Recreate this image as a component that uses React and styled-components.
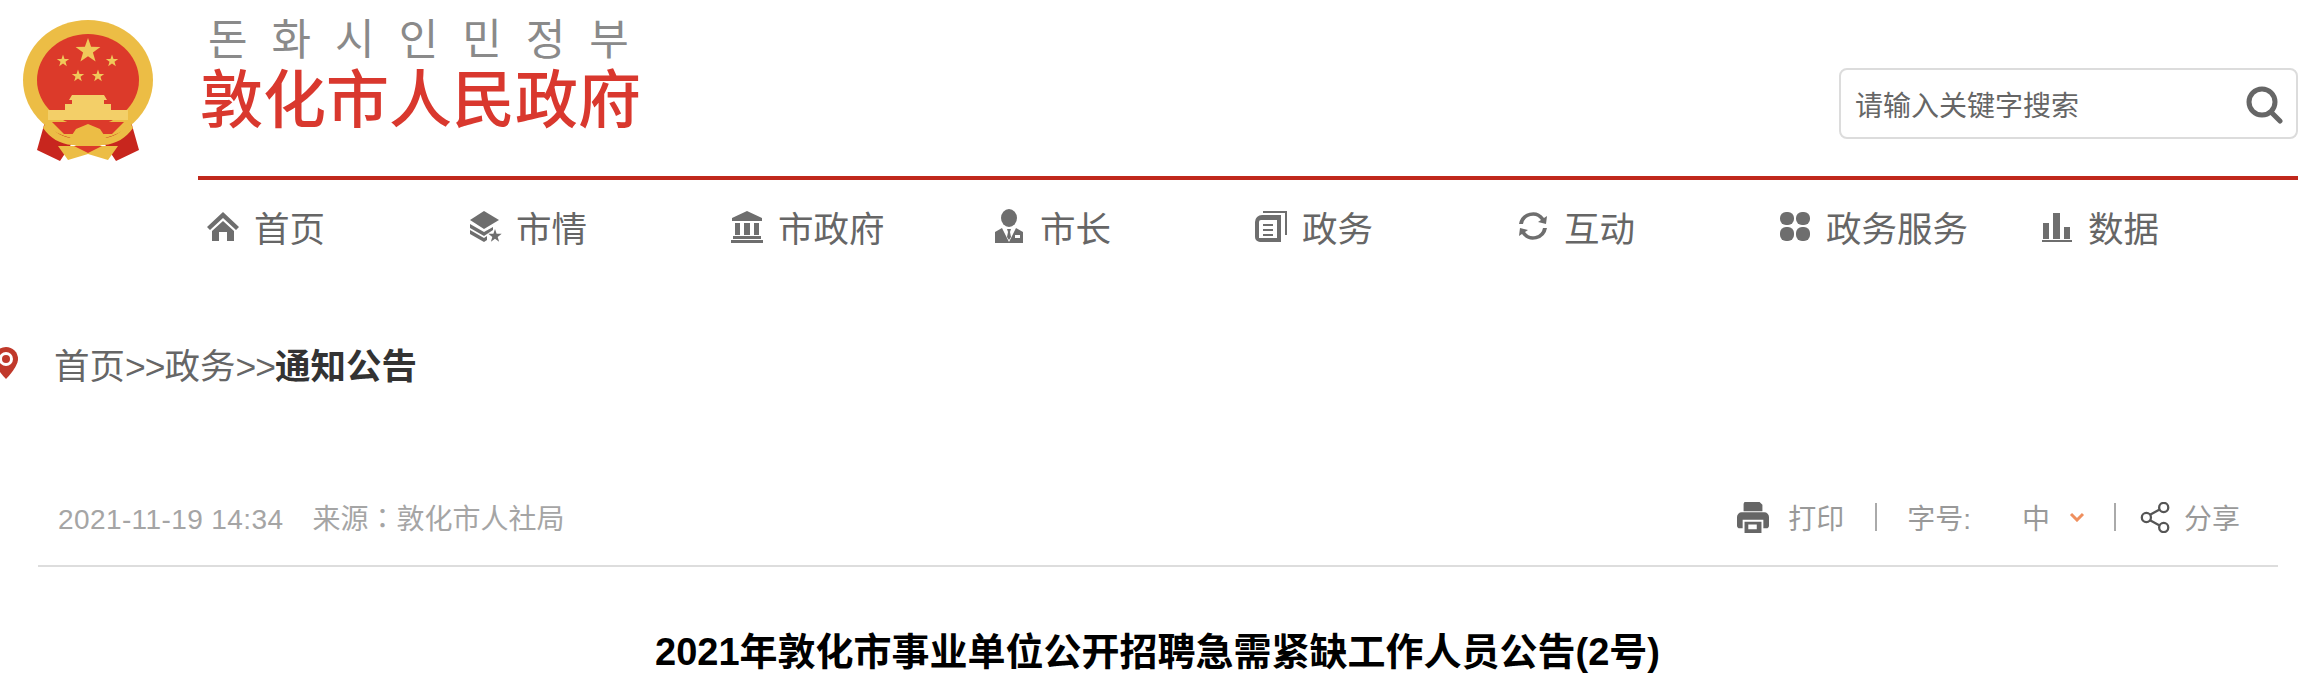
import React from "react";
import styled, { createGlobalStyle } from "styled-components";

const GlobalStyle = createGlobalStyle`
  html, body {
    margin: 0;
    padding: 0;
    background: #fff;
    overflow: hidden;
    font-family: "Liberation Sans", "Noto Sans CJK SC", sans-serif;
  }
`;

const Page = styled.div`
  width: 2312px;
  height: 680px;
  overflow: hidden;
`;
const Header = styled.header`
  display: flex;
  padding-right: 14px;
`;
const LogoBox = styled.div`
  width: 198px;
  flex: none;
  padding: 16px 0 0 20px;
  box-sizing: border-box;
`;
const HeaderMain = styled.div`
  flex: 1;
  min-width: 0;
`;
const BrandRow = styled.div`
  height: 176px;
  display: flex;
  justify-content: space-between;
  align-items: flex-start;
`;
const Brand = styled.div`
  display: flex;
  flex-direction: column;
  padding-left: 2px;
`;
const BrandKorean = styled.div`
  font-family: "Noto Sans CJK KR", sans-serif;
  font-weight: 400;
  font-size: 43px;
  line-height: 46px;
  letter-spacing: 24px;
  color: #8a8a8a;
  padding: 13px 0 0 8px;
`;
const BrandName = styled.div`
  font-family: "Noto Sans CJK SC", sans-serif;
  font-weight: 500;
  font-size: 63px;
  line-height: 70px;
  margin-top: 1px;
  color: #d9382e;
  white-space: nowrap;
`;
const SearchBox = styled.div`
  width: 459px;
  height: 71px;
  margin-top: 68px;
  box-sizing: border-box;
  border: 2px solid #dcdcdc;
  border-radius: 8px;
  display: flex;
  align-items: center;
  justify-content: space-between;
  padding: 0 12px 0 14px;
  font-size: 28px;
  color: #666;
`;
const RedLine = styled.div`
  height: 4px;
  background: #c0281c;
`;
const Nav = styled.nav`
  display: flex;
  height: 92px;
  align-items: center;
  padding-left: 8px;
`;
const NavItem = styled.a`
  width: 262px;
  flex: none;
  display: flex;
  align-items: center;
  gap: 14px;
  font-size: 35.5px;
  color: #666;
  white-space: nowrap;
  &:last-child {
    width: auto;
  }
`;
const NavIcon = styled.svg`
  width: 34px;
  height: 34px;
  flex: none;
  fill: #6e6e6e;
`;
const Crumbs = styled.div`
  height: 76px;
  margin-top: 53px;
  display: flex;
  align-items: center;
  font-size: 35.5px;
  color: #666;
  white-space: pre;
`;
const Pin = styled.svg`
  width: 24px;
  height: 32px;
  margin: 0 36px 0 -6px;
  flex: none;
`;
const Arrows = styled.span`
  letter-spacing: -1px;
`;
const Current = styled.strong`
  color: #333;
  font-weight: 700;
`;
const MetaRow = styled.div`
  margin: 84px 34px 0 38px;
  height: 64px;
  padding: 0 0 16px 20px;
  border-bottom: 2px solid #ddd;
  display: flex;
  align-items: center;
  justify-content: space-between;
  font-size: 28px;
  color: #a5a5a5;
`;
const MetaLeft = styled.div`
  display: flex;
  align-items: baseline;
  gap: 29px;
`;
const DateText = styled.span`
  letter-spacing: 0.4px;
`;
const FullColon = styled.span`
  font-family: "Noto Sans CJK TC", sans-serif;
`;
const Tools = styled.div`
  display: flex;
  align-items: center;
  color: #999;
  padding-right: 38px;
`;
const ToolIcon = styled.svg`
  width: ${(p) => p.$size || 32}px;
  height: ${(p) => p.$size || 32}px;
  fill: ${(p) => p.$fill || "#666"};
  flex: none;
  margin-right: ${(p) => p.$gap || 19}px;
`;
const Sep = styled.span`
  width: 2px;
  height: 28px;
  background: #aaa;
  margin: 0 ${(p) => p.$right}px 0 ${(p) => p.$left}px;
`;
const Size = styled.span`
  margin-left: 51px;
  margin-right: 19px;
`;
const Title = styled.h1`
  margin: 60px 0 0;
  padding-left: 3px;
  text-align: center;
  font-size: 38px;
  line-height: 50px;
  font-weight: 700;
  color: #000;
  white-space: nowrap;
`;

const star = (cx, cy, r) => {
  const pts = [];
  for (let i = 0; i < 10; i++) {
    const rad = i % 2 ? r * 0.4 : r;
    const a = (Math.PI / 5) * i - Math.PI / 2;
    pts.push(`${(cx + rad * Math.cos(a)).toFixed(1)},${(cy + rad * Math.sin(a)).toFixed(1)}`);
  }
  return pts.join(" ");
};

const Emblem = () => (
  <svg width="140" height="150" viewBox="20 16 140 150">
    <path d="M46 118 L37 150 L60 161 L74 140 L102 140 L116 161 L139 150 L130 118 Z" fill="#c8261e" />
    <ellipse cx="88" cy="80" rx="65" ry="60" fill="#ecbd45" />
    <ellipse cx="88" cy="80" rx="51" ry="46" fill="#dc3a2a" />
    <polygon points={star(88, 51, 13)} fill="#f0c95a" />
    <polygon points={star(63, 61, 6.5)} fill="#f0c95a" />
    <polygon points={star(112, 61, 6.5)} fill="#f0c95a" />
    <polygon points={star(78, 76, 6.5)} fill="#f0c95a" />
    <polygon points={star(98, 76, 6.5)} fill="#f0c95a" />
    <path d="M72 95h32l3 5h-3v4h7v6H65v-6h7v-4h-3z" fill="#f3cf68" />
    <rect x="48" y="110" width="80" height="10" fill="#f3cf68" />
    <path d="M52 122h72l-12 12H64z" fill="#dc3a2a" />
    <path d="M46 122c6 8 14 14 24 16l6-9 12-5 12 5 6 9c10-2 18-8 24-16l3 6c-7 10-17 16-29 17H72c-12-1-22-7-29-17z" fill="#ecbd45" />
    <path d="M58 146h16l14-6 14 6h16l-10 14-20-6-20 6z" fill="#ecbd45" />
    <path d="M74 146h28l-14 7z" fill="#dc3a2a" />
  </svg>
);

const Icons = {
  home: (
    <path d="M17 3 1 18l3 3L17 9l13 12 3-3zM6 22v10h7v-9h8v9h7V22L17 12z" />
  ),
  layers: (
    <>
      <path d="M16 2 31 11 16 20 2 11z" />
      <path d="M2 15l14 8 9-5v3l-9 6-14-8zM2 21l14 8 3-2v4l-3 2-14-8z" />
      <polygon points={star(27, 27, 7)} />
    </>
  ),
  bank: (
    <path d="M17 2 32 9v3H2V9zM5 14h5v12H5zM14 14h6v12h-6zM24 14h5v12h-5zM3 27h28v3H3zM1 31h32v3H1z" />
  ),
  person: (
    <>
      <ellipse cx="17" cy="9" rx="8" ry="9" />
      <path fillRule="evenodd" d="M3 23l7-4 7 14 7-14 7 4v11H3zM23 26h5v3h-5z" />
      <path d="M15 20h4l-1 3 1 5-2 3-2-3 1-5z" />
    </>
  ),
  doc: (
    <>
      <path d="M9 2h24v24h-2V4H9z" />
      <path fillRule="evenodd" d="M8 6h19v27H6a5 5 0 0 1-5-5V13a7 7 0 0 1 7-7zm-1 5a2 2 0 0 0-2 2v16h18V11z" />
      <path d="M9 15h10v2H9zM9 20h10v2H9zM9 25h10v2H9z" />
    </>
  ),
  refresh: (
    <>
      <path d="M7 15A10 10 0 0 1 25 11l-3 2 8 2 1-8-3 2A14 14 0 0 0 3 15z" />
      <path d="M27 19A10 10 0 0 1 9 23l3-2-8-2-1 8 3-2A14 14 0 0 0 31 19z" />
    </>
  ),
  apps: (
    <>
      <rect x="2" y="3" width="14" height="13" rx="6" />
      <rect x="18" y="3" width="14" height="13" rx="6" />
      <rect x="2" y="18" width="14" height="14" rx="6" />
      <rect x="18" y="18" width="14" height="14" rx="6" />
    </>
  ),
  chart: (
    <path d="M2 33h30v-2H2zM3 14h6v16H3zM13 4h7v26h-7zM24 18h6v12h-6z" />
  ),
};

const navItems = [
  ["home", "首页"],
  ["layers", "市情"],
  ["bank", "市政府"],
  ["person", "市长"],
  ["doc", "政务"],
  ["refresh", "互动"],
  ["apps", "政务服务"],
  ["chart", "数据"],
];

const App = () => (
  <Page>
    <GlobalStyle />
    <Header>
      <LogoBox>
        <Emblem />
      </LogoBox>
      <HeaderMain>
        <BrandRow>
          <Brand>
            <BrandKorean>돈화시인민정부</BrandKorean>
            <BrandName>敦化市人民政府</BrandName>
          </Brand>
          <SearchBox>
            请输入关键字搜索
            <svg width="40" height="40" viewBox="0 0 40 40" fill="none" stroke="#666" strokeWidth="5">
              <circle cx="18" cy="18" r="13" />
              <path d="M27 28l9 9" strokeLinecap="round" />
            </svg>
          </SearchBox>
        </BrandRow>
        <RedLine />
        <Nav>
          {navItems.map(([icon, label]) => (
            <NavItem key={label}>
              <NavIcon viewBox="0 0 34 34">{Icons[icon]}</NavIcon>
              {label}
            </NavItem>
          ))}
        </Nav>
      </HeaderMain>
    </Header>
    <Crumbs>
      <Pin viewBox="0 0 24 32">
        <path d="M12 0a12 12 0 0 1 12 12c0 8-12 20-12 20S0 20 0 12A12 12 0 0 1 12 0z" fill="#c0392b" />
        <circle cx="12" cy="12" r="7" fill="#fff" />
        <circle cx="12" cy="12" r="4" fill="#c0392b" />
      </Pin>
      <span>首页<Arrows>&gt;&gt;</Arrows>政务<Arrows>&gt;&gt;</Arrows><Current>通知公告</Current></span>
    </Crumbs>
    <MetaRow>
      <MetaLeft>
        <DateText>2021-11-19 14:34</DateText>
        <span>来源<FullColon>：</FullColon>敦化市人社局</span>
      </MetaLeft>
      <Tools>
        <ToolIcon viewBox="0 0 34 34">
          <path fillRule="evenodd" d="M8 1h16l3 3v7H7V3zM5 12h24a5 5 0 0 1 5 5v9a3 3 0 0 1-3 3h-3v-9H6v9H3a3 3 0 0 1-3-3v-9a5 5 0 0 1 5-5z" />
          <path fillRule="evenodd" d="M8 22h18v12H8zm4 3v5h9v-5z" />
        </ToolIcon>
        打印
        <Sep $left={31} $right={30} />
        字号:
        <Size>中</Size>
        <svg width="16" height="10" viewBox="0 0 16 10" fill="none" stroke="#ef8f5e" strokeWidth="3">
          <path d="M2 2l6 6 6-6" />
        </svg>
        <Sep $left={29} $right={24} />
        <ToolIcon viewBox="0 0 34 34" $size={31} $gap={13} $fill="none">
          <g stroke="#555" strokeWidth="2.5">
            <circle cx="7" cy="17" r="5" />
            <circle cx="26" cy="6" r="5" />
            <circle cx="26" cy="28" r="5" />
            <path d="M11 14 22 8M11 20l11 6" />
          </g>
        </ToolIcon>
        分享
      </Tools>
    </MetaRow>
    <Title>2021年敦化市事业单位公开招聘急需紧缺工作人员公告(2号)</Title>
  </Page>
);

export default App;
